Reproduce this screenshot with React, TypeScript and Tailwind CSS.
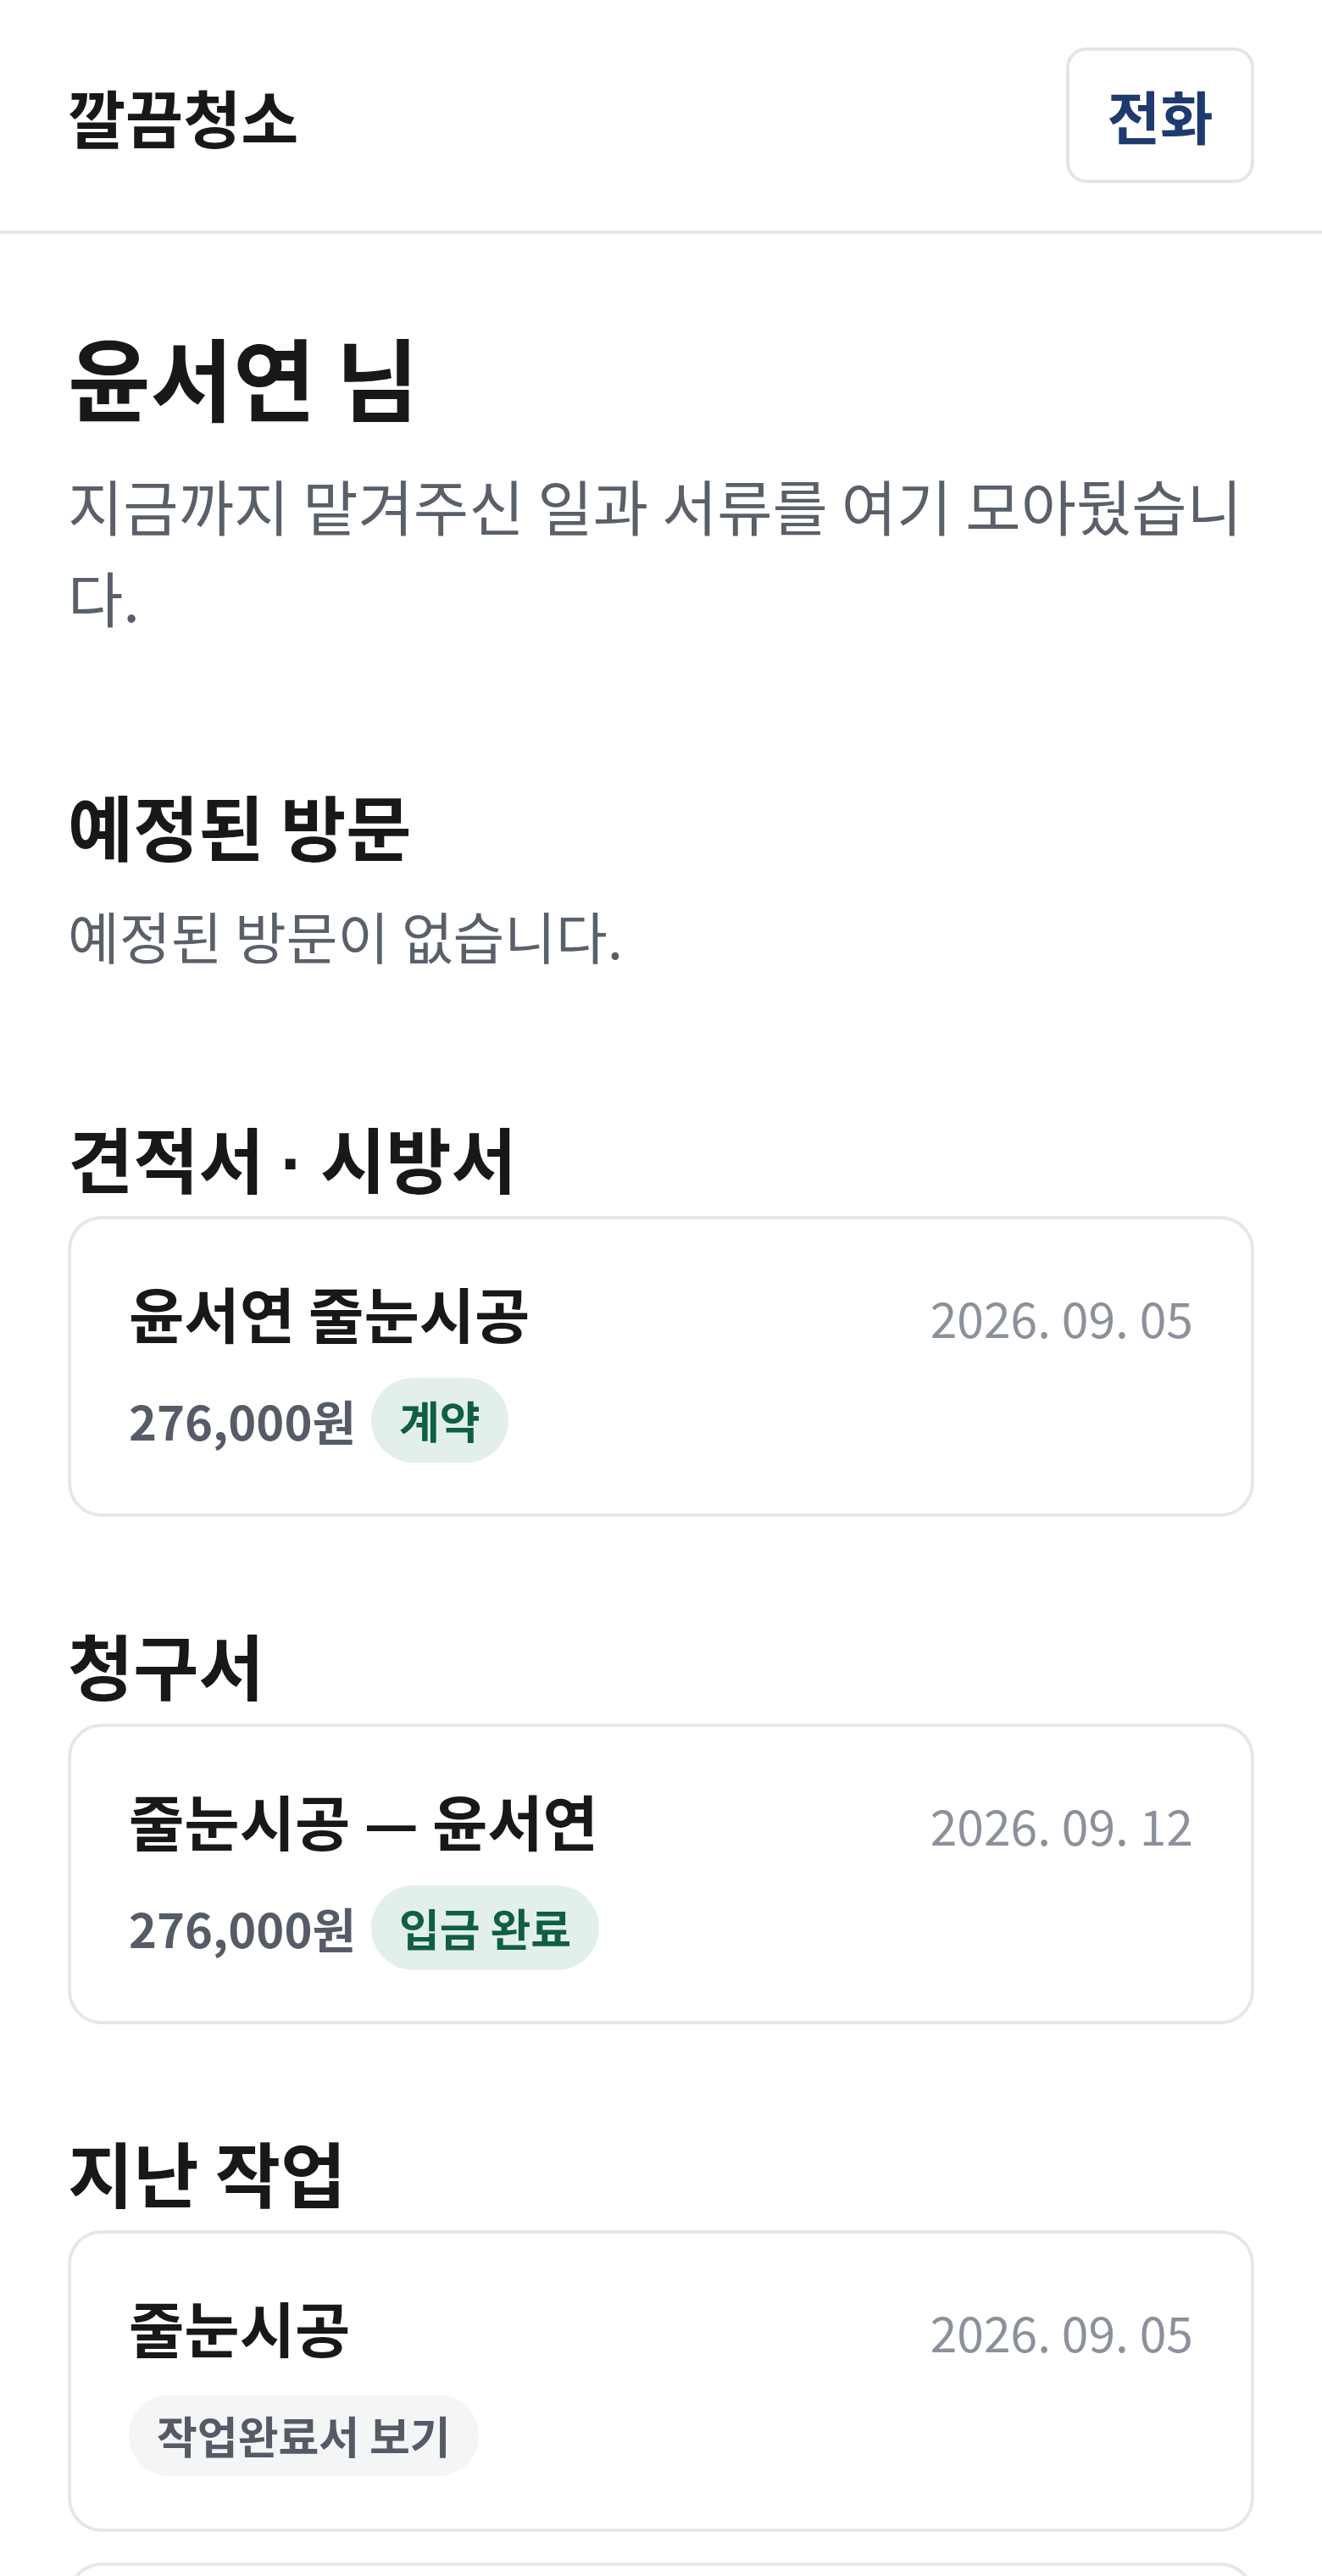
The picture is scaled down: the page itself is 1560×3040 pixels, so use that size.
import React from 'react';

interface DocItem {
  id: number;
  title: string;
  date: string;
  amount?: string;
  status?: string;
  action?: string;
}

const quotes: DocItem[] = [
  { id: 1, title: '윤서연 줄눈시공', date: '2026. 09. 05', amount: '276,000원', status: '계약' },
];

const invoices: DocItem[] = [
  { id: 2, title: '줄눈시공 — 윤서연', date: '2026. 09. 12', amount: '276,000원', status: '입금 완료' },
];

const pastJobs: DocItem[] = [
  { id: 3, title: '줄눈시공', date: '2026. 09. 05', action: '작업완료서 보기' },
  { id: 4, title: '줄눈시공', date: '2026. 08. 21', action: '작업완료서 보기' },
];

function DocCard({ item }: { item: DocItem }) {
  return (
    <article className="bg-white border-4 border-[#e5e7eb] rounded-[40px] px-[68px] pt-[60px] pb-[60px]">
      <div className="flex items-baseline justify-between gap-6">
        <h3 className="text-[71px] leading-[1.4] font-bold text-[#18181b]">{item.title}</h3>
        <span className="text-[57px] leading-[1.4] text-[#8b919b] whitespace-nowrap">{item.date}</span>
      </div>
      {item.amount ? (
        <div className="flex items-center gap-[18px] mt-[28px] h-[100px]">
          <span className="text-[56px] font-bold text-[#565c67]">{item.amount}</span>
          <span className="inline-flex items-center h-[100px] px-[33px] rounded-full bg-[#e3f0ea] text-[52px] font-bold text-[#0f5e46]">
            {item.status}
          </span>
        </div>
      ) : (
        <div className="flex items-center h-[100px] mt-[28px]">
          <span className="inline-flex items-center h-[96px] px-[33px] rounded-full bg-[#f4f5f7] text-[52px] font-bold text-[#555b66] cursor-pointer">
            {item.action}
          </span>
        </div>
      )}
    </article>
  );
}

function Section({ title, items, first }: { title: React.ReactNode; items: DocItem[]; first?: boolean }) {
  return (
    <section className={first ? 'mt-[154px]' : 'mt-[119px]'}>
      <h2 className="text-[84px] leading-[1.3] font-bold text-[#18181b] mb-[15px]">{title}</h2>
      <div className="flex flex-col gap-[36px]">
        {items.map(item => <DocCard key={item.id} item={item} />)}
      </div>
    </section>
  );
}

export default function App() {
  return (
    <div className="min-h-screen bg-white font-['Noto_Sans_CJK_KR','Noto_Sans',sans-serif]">
      {/* Top bar */}
      <header className="h-[276px] border-b-4 border-[#e5e7eb] px-[80px] flex items-center justify-between">
        <span className="text-[74px] font-bold text-[#18181b]">깔끔청소</span>
        <a className="flex items-center justify-center w-[222px] h-[160px] border-4 border-[#e2e5ea] rounded-[24px] bg-white text-[68px] font-bold text-[#1e3a6e]">
          전화
        </a>
      </header>

      <main className="px-[80px] pt-[105px] pb-[120px]">
        <h1 className="text-[106px] leading-[125px] font-bold text-[#18181b]">윤서연 님</h1>
        <p className="mt-[35px] text-[71px] leading-[108px] text-[#59606a]">
          지금까지 맡겨주신 일과 서류를 여기 모아뒀습니다.
        </p>

        <section className="mt-[162px]">
          <h2 className="text-[84px] leading-[1.3] font-bold text-[#18181b]">예정된 방문</h2>
          <p className="mt-[23px] text-[66px] leading-[1.6] text-[#59606a]">예정된 방문이 없습니다.</p>
        </section>

        <Section
          title={<>견적서 <span className="font-['Liberation_Sans',sans-serif] leading-none">·</span> 시방서</>}
          items={quotes}
          first
        />
        <Section title="청구서" items={invoices} />
        <Section title="지난 작업" items={pastJobs} />
      </main>
    </div>
  );
}
